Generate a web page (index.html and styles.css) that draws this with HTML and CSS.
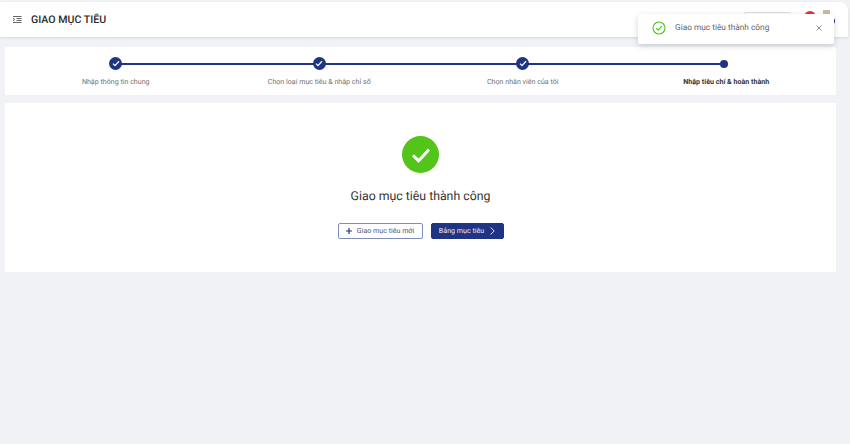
FILE: index.html
```html
<!DOCTYPE html>
<html lang="vi">
<head>
<meta charset="utf-8">
<title>Giao mục tiêu</title>
<link rel="stylesheet" href="styles.css">
</head>
<body>
<div class="page">
  <header class="topbar">
    <svg class="menu-icon" width="9" height="7" viewBox="0 0 9 7"><path d="M0 .5h8.500M3.500 2.500h5M3.500 4.500h5M0 6.500h8.500M0 2.200l1.800 1.300-1.800 1.300" fill="none" stroke="#666" stroke-width="1"/></svg>
    <h1 class="title">GIAO MỤC TIÊU</h1>
    <div class="top-right">
      <span class="top-btn"></span>
      <span class="red-dot"></span>
      <span class="flag"></span>
      <span class="avatar"></span>
    </div>
  </header>
  <section class="steps">
    <div class="step done">
      <span class="dot"><svg width="8" height="7" viewBox="0 0 8 7"><path d="M1 3.600l2 2 4-4.400" fill="none" stroke="#fff" stroke-width="1.300"/></svg></span>
      <span class="label">Nhập thông tin chung</span>
    </div>
    <div class="step done">
      <span class="dot"><svg width="8" height="7" viewBox="0 0 8 7"><path d="M1 3.600l2 2 4-4.400" fill="none" stroke="#fff" stroke-width="1.300"/></svg></span>
      <span class="label">Chọn loại mục tiêu &amp; nhập chỉ số</span>
    </div>
    <div class="step done">
      <span class="dot"><svg width="8" height="7" viewBox="0 0 8 7"><path d="M1 3.600l2 2 4-4.400" fill="none" stroke="#fff" stroke-width="1.300"/></svg></span>
      <span class="label">Chọn nhân viên của tôi</span>
    </div>
    <div class="step current">
      <span class="dot small"></span>
      <span class="label">Nhập tiêu chí &amp; hoàn thành</span>
    </div>
  </section>
  <section class="result">
    <span class="big-check"><svg width="20" height="16" viewBox="0 0 20 16"><path d="M2 8.200l5.600 5.600L18 2.400" fill="none" stroke="#fff" stroke-width="3"/></svg></span>
    <h2 class="result-title">Giao mục tiêu thành công</h2>
    <div class="actions">
      <button class="btn outline"><svg width="6" height="6" viewBox="0 0 6 6"><path d="M3 0v6M0 3h6" stroke="#1f3483" stroke-width="1.200"/></svg>Giao mục tiêu mới</button>
      <button class="btn solid">Bảng mục tiêu<svg width="5" height="8" viewBox="0 0 5 8"><path d="M.7.500l3.500 3.500-3.500 3.500" fill="none" stroke="#fff" stroke-width=".9"/></svg></button>
    </div>
  </section>
</div>
<div class="toast">
  <svg class="toast-icon" width="14" height="14" viewBox="0 0 14 14"><circle cx="7" cy="7" r="6" fill="none" stroke="#52c41a" stroke-width="1.100"/><path d="M4.200 7.100l2 2 3.600-4" fill="none" stroke="#52c41a" stroke-width="1.100"/></svg>
  <span class="toast-text">Giao mục tiêu thành công</span>
  <svg class="toast-close" width="6" height="6" viewBox="0 0 6 6"><path d="M.5.500l5 5M5.500.500l-5 5" stroke="#777" stroke-width=".8"/></svg>
</div>
</body>
</html>
```
FILE: styles.css
```css
* { box-sizing: border-box; }
html, body { margin: 0; height: 100%; }
body { background: #f0f2f5; font-family: Roboto, "Liberation Sans", sans-serif; overflow: hidden; position: relative; text-rendering: geometricPrecision; }
.page { display: flex; flex-direction: column; height: 444px; padding-top: 2px; }
.topbar { height: 35px; margin-right: 2px; background: #fff; box-shadow: 0 1px 3px rgba(0,0,0,.1); display: flex; align-items: center; padding: 0 13px; border-radius: 0 8px 0 0; }
.menu-icon { flex: none; }
.title { margin: 1px 0 0 9px; font-size: 10.6px; font-weight: 500; color: #2b2b2b; line-height: 1; }
.top-right { margin-left: auto; align-self: flex-start; display: flex; align-items: flex-start; padding-top: 9px; }
.top-btn { width: 47px; height: 20px; margin-top: 1px; border: 1px solid #ddd; border-radius: 2px; }
.red-dot { width: 12px; height: 12px; margin-left: 13px; background: #e8303a; border-radius: 50%; }
.flag { width: 7px; height: 10px; margin-left: 7px; margin-top: -1px; background: #c9bd9a; }
.avatar { width: 5px; height: 6px; margin-top: 7px; background: #1f3483; border-radius: 50%; }
.steps { margin: 10px 14px 0 5px; height: 48px; background: #fff; display: grid; grid-template-columns: repeat(4, 1fr); padding: 10px 8px 0 9px; }
.step { position: relative; display: flex; flex-direction: column; align-items: center; gap: 7px; }
.step::before { content: ""; position: absolute; top: 6px; left: 50%; width: 100%; height: 2px; background: #1f3483; }
.step:nth-child(3)::before { width: calc(100% - 3px); }
.step.current::before { display: none; }
.dot { position: relative; width: 13px; height: 13px; border-radius: 50%; background: #1f3483; display: flex; align-items: center; justify-content: center; }
.dot.small { width: 8px; height: 8px; margin: 3px 4px 2px 0; }
.label { font-size: 7.1px; line-height: 10px; color: #6f6f6f; font-weight: 400; white-space: nowrap; }
.current .label { font-weight: 700; color: #33333c; }
.result { margin: 8px 14px 0 5px; height: 169px; background: #fff; display: flex; flex-direction: column; align-items: center; padding-top: 33px; }
.big-check { width: 37px; height: 37px; border-radius: 50%; background: #52c41a; display: flex; align-items: center; justify-content: center; }
.result-title { margin: 14px 0 0; font-size: 12.3px; line-height: 20px; font-weight: 400; color: #333; }
.actions { display: flex; gap: 8px; margin-top: 16px; }
.btn { height: 16px; border-radius: 2px; font: 400 7.1px/1 Roboto, sans-serif; text-rendering: geometricPrecision; display: flex; align-items: center; justify-content: center; gap: 5px; padding: 0; }
.btn.outline { width: 85px; background: #fff; border: 1px solid #7f8dbd; color: #55566a; }
.btn.solid { width: 73px; background: #1f3483; border: 1px solid #1f3483; color: #ebedf5; gap: 6px; }
.toast { position: absolute; top: 14px; left: 638px; width: 196px; height: 30px; background: #fff; border-radius: 2px; box-shadow: 0 2px 6px rgba(0,0,0,.16); display: flex; align-items: center; padding: 0 12px 2px 14px; }
.toast-text { margin-left: 9px; font-size: 8.3px; color: #666; }
.toast-close { margin-left: auto; }
```
